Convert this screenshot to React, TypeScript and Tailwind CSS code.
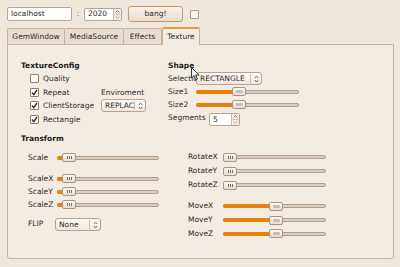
import React from "react";

const Check = ({ checked }: { checked: boolean }) => (
  <div className="w-[9px] h-[9px] bg-white border border-[#8c7f72] rounded-[1px] flex items-center justify-center shrink-0">
    {checked && (
      <svg width="7" height="7" viewBox="0 0 7 7">
        <path d="M1 3.5 L2.8 5.6 L6 1" stroke="#2e2e2e" strokeWidth="1.4" fill="none" />
      </svg>
    )}
  </div>
);

const UpDown = () => (
  <svg width="5" height="8" viewBox="0 0 5 8">
    <path d="M0.8 3 L2.5 1.2 L4.2 3 M0.8 5 L2.5 6.8 L4.2 5" stroke="#555" strokeWidth="0.9" fill="none" />
  </svg>
);

const Combo = ({ text, w }: { text: string; w: string }) => (
  <div
    className={`${w} relative z-10 h-[13px] flex items-center rounded-[3px] border border-[#b4a491] bg-gradient-to-b from-[#fdfbf8] to-[#efe7dd] overflow-hidden`}
  >
    <span className="flex-1 pl-[3px] overflow-hidden whitespace-nowrap text-[#2a2a2a]">{text}</span>
    <div className="w-px h-[9px] bg-[#c9bbab]" />
    <div className="w-[10px] flex justify-center">
      <UpDown />
    </div>
  </div>
);

const Spin = ({ text, w }: { text: string; w: string }) => (
  <div className={`${w} h-[13px] flex rounded-[2px] border border-[#b4a491] bg-white overflow-hidden`}>
    <span className="flex-1 pl-[3px] flex items-center text-[#2a2a2a]">{text}</span>
    <div className="w-[8px] flex flex-col border-l border-[#c9bbab] bg-[#f3ede6]">
      <div className="flex-1 flex items-center justify-center border-b border-[#d4c8bb]">
        <svg width="5" height="3" viewBox="0 0 5 3">
          <path d="M0.5 2.5 L2.5 0.5 L4.5 2.5" stroke="#666" strokeWidth="0.8" fill="none" />
        </svg>
      </div>
      <div className="flex-1 flex items-center justify-center">
        <svg width="5" height="3" viewBox="0 0 5 3">
          <path d="M0.5 0.5 L2.5 2.5 L4.5 0.5" stroke="#999" strokeWidth="0.8" fill="none" />
        </svg>
      </div>
    </div>
  </div>
);

const Slider = ({ pos, w, grip }: { pos: number; w: number; grip: "lines" | "bar" }) => (
  <div className="relative h-[9px] flex items-center" style={{ width: w }}>
    <div className="w-full h-[4px] rounded-[2px] border border-[#ae9e8c] bg-[#d9cec1]" />
    {pos > 0 && (
      <div className="absolute left-0 h-[4px] rounded-l-[2px] bg-[#e7800c]" style={{ width: pos + 1 }} />
    )}
    <div
      className="absolute top-0 h-[9px] w-[14px] rounded-[2px] border border-[#a8957f] bg-gradient-to-b from-[#faf7f3] to-[#e6ddd2] flex items-center justify-center"
      style={{ left: pos }}
    >
      {grip === "lines" ? (
        <div className="flex gap-[1px]">
          <div className="w-px h-[3px] bg-[#7d6f62]" />
          <div className="w-px h-[3px] bg-[#7d6f62]" />
          <div className="w-px h-[3px] bg-[#7d6f62]" />
        </div>
      ) : (
        <div className="w-[7px] h-[3px] bg-[#cbbfb2] rounded-[1px]" />
      )}
    </div>
  </div>
);

const CheckRow = ({ label, checked }: { label: string; checked: boolean }) => (
  <div className="h-[13.5px] flex items-center gap-[4px]">
    <Check checked={checked} />
    <span>{label}</span>
  </div>
);

const LRow = ({ label, pos }: { label: string; pos: number }) => (
  <div className="h-[13px] flex items-center">
    <span className="w-[29px] whitespace-nowrap">{label}</span>
    <Slider pos={pos} w={102} grip="lines" />
  </div>
);

const RRow = ({ label, pos, grip }: { label: string; pos: number; grip: "lines" | "bar" }) => (
  <div className="h-[14px] flex items-center">
    <span className="w-[35px] whitespace-nowrap">{label}</span>
    <Slider pos={pos} w={103} grip={grip} />
  </div>
);

export default function App() {
  return (
    <div
      className="relative w-[400px] h-[267px] bg-[#efe6dc] text-[7.5px] text-[#2c2a28] overflow-hidden"
      style={{ fontFamily: '"DejaVu Sans", "Liberation Sans", sans-serif' }}
    >
      {/* top bar */}
      <div className="flex items-center h-[16px] mt-[6px] pl-[7px]">
        <div className="w-[65px] h-[14px] bg-white border border-[#b4a491] rounded-[2px] flex items-center pl-[3px] text-[#2a2a2a]">
          localhost
        </div>
        <span className="w-[12px] text-center text-[#555]">:</span>
        <Spin text="2020" w="w-[38px]" />
        <div className="ml-[6px] w-[55px] h-[16px] rounded-[3px] border border-[#cc9660] bg-gradient-to-b from-[#f8f2ea] to-[#e8dccd] flex items-center justify-center text-[#2a2a2a]">
          bang!
        </div>
        <div className="ml-[7px] w-[9px] h-[9px] border border-[#a99a8a] bg-[#f6f1eb] rounded-[1px]" />
      </div>

      {/* tabs */}
      <div className="flex items-end h-[17px] mt-[5px] pl-[7px]">
        <div className="w-[58px] h-[16px] flex items-center justify-center border border-b-0 border-[#c4b3a0] bg-[#e8ddd0] rounded-t-[2px]">
          GemWindow
        </div>
        <div className="w-[59px] h-[16px] flex items-center justify-center border border-l-0 border-b-0 border-[#c4b3a0] bg-[#e8ddd0] rounded-t-[2px]">
          MediaSource
        </div>
        <div className="w-[38px] h-[16px] flex items-center justify-center border border-l-0 border-b-0 border-[#c4b3a0] bg-[#e8ddd0] rounded-t-[2px]">
          Effects
        </div>
        <div className="relative w-[38px] h-[18px] -mb-px flex items-center justify-center border-x border-[#c4b3a0] border-t-2 border-t-[#e89a3c] bg-[#f3ece3] rounded-t-[2px] z-10">
          Texture
        </div>
      </div>

      {/* panel */}
      <div className="ml-[7px] w-[387px] h-[215px] border border-[#c4b3a0] bg-[#f3ece3] rounded-b-[3px]">
        {/* top section */}
        <div className="flex pt-[15px] pl-[13px]">
          <div className="w-[147px]">
            <div className="h-[12px] flex items-center font-bold text-[#1a1a1a]">TextureConfig</div>
            <div className="flex pl-[9px]">
              <div className="w-[71px]">
                <CheckRow label="Quality" checked={false} />
                <CheckRow label="Repeat" checked={true} />
                <CheckRow label="ClientStorage" checked={true} />
                <CheckRow label="Rectangle" checked={true} />
              </div>
              <div>
                <div className="h-[13.5px]" />
                <div className="h-[13.5px] flex items-center">Enviroment</div>
                <div className="h-[13.5px] flex items-center">
                  <Combo text="REPLAC" w="w-[45px]" />
                </div>
              </div>
            </div>
          </div>
          <div>
            <div className="h-[12px] flex items-center font-bold text-[#1a1a1a]">Shape</div>
            <div className="h-[13px] flex items-center">
              <span className="w-[28px] whitespace-nowrap">Selection</span>
              <Combo text="RECTANGLE" w="w-[66px]" />
            </div>
            <div className="h-[13px] flex items-center">
              <span className="w-[28px]">Size1</span>
              <Slider pos={36} w={103} grip="bar" />
            </div>
            <div className="h-[13px] flex items-center">
              <span className="w-[28px]">Size2</span>
              <Slider pos={36} w={103} grip="bar" />
            </div>
            <div className="h-[14px] flex items-start">
              <span className="w-[41px] pt-[1px]">Segments</span>
              <div className="mt-[2px]">
                <Spin text="5" w="w-[31px]" />
              </div>
            </div>
          </div>
        </div>

        {/* transform */}
        <div className="pl-[13px] mt-[7px] h-[12px] flex items-center font-bold text-[#1a1a1a]">Transform</div>
        <div className="flex">
          <div className="pl-[20px] pt-[6px] w-[180px]">
            <LRow label="Scale" pos={5} />
            <div className="h-[8px]" />
            <LRow label="ScaleX" pos={5} />
            <LRow label="ScaleY" pos={5} />
            <LRow label="ScaleZ" pos={5} />
            <div className="h-[6px]" />
            <div className="h-[13px] flex items-center">
              <span className="w-[27px]">FLIP</span>
              <div className="mt-[2px]">
                <Combo text="None" w="w-[46px]" />
              </div>
            </div>
          </div>
          <div className="pt-[5px]">
            <RRow label="RotateX" pos={0} grip="lines" />
            <RRow label="RotateY" pos={0} grip="lines" />
            <RRow label="RotateZ" pos={0} grip="lines" />
            <div className="h-[7px]" />
            <RRow label="MoveX" pos={46} grip="bar" />
            <RRow label="MoveY" pos={46} grip="bar" />
            <div className="h-[13px] flex items-center">
              <span className="w-[35px] whitespace-nowrap">MoveZ</span>
              <Slider pos={46} w={103} grip="bar" />
            </div>
          </div>
        </div>
      </div>

      {/* mouse cursor */}
      <svg className="absolute left-[191px] top-[67px] z-20" width="10" height="14" viewBox="0 0 10 14">
        <path d="M0.5 0.5 L0.5 11 L3 8.6 L4.8 12.8 L6.4 12.1 L4.7 8.1 L8.2 8.1 Z" fill="#f4f4f4" stroke="#222" strokeWidth="0.9" />
      </svg>
    </div>
  );
}
